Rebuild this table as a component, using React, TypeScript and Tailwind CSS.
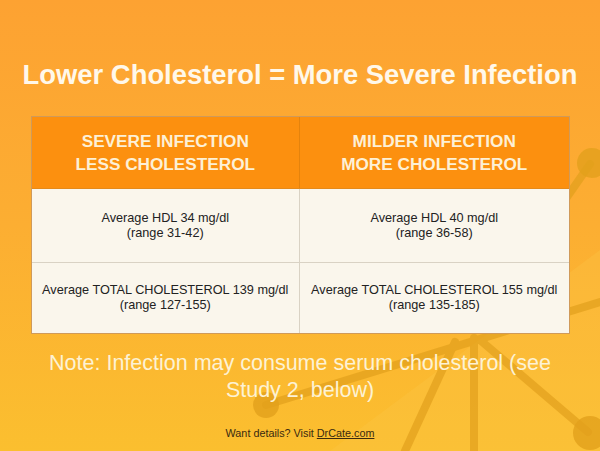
const font = { fontFamily: '"Liberation Sans", Arial, sans-serif' };

function Molecule() {
  // decorative network drawn behind the slide content
  return (
    <svg className="absolute inset-0" width="600" height="451" viewBox="0 0 600 451">
      <polygon points="330,451 600,250 600,451" fill="#fcc64a" opacity="0.3" />
      <g stroke="#e2a01c" strokeWidth="8" opacity="0.7" strokeLinecap="round">
        <line x1="266" y1="405" x2="600" y2="302" />
        <line x1="455" y1="342" x2="405" y2="451" />
        <line x1="474" y1="338" x2="474" y2="451" />
        <line x1="480" y1="340" x2="588" y2="432" />
        <line x1="590" y1="164" x2="565" y2="200" />
      </g>
      <g fill="#e2a01c" opacity="0.8">
        <circle cx="266" cy="405" r="13" />
        <circle cx="592" cy="163" r="15" />
        <circle cx="590" cy="433" r="17" />
      </g>
    </svg>
  );
}

function HeadCell({ lines, last }: { lines: string[]; last?: boolean }) {
  return (
    <div
      className={`flex flex-col items-center justify-center bg-[#fc900f] text-[17.2px] font-bold leading-[23px] text-[#fdf0d6] ${
        last ? "" : "border-r border-[#e5830c]"
      }`}
    >
      {lines.map((l) => (
        <span key={l}>{l}</span>
      ))}
    </div>
  );
}

function Cell({ lines, last }: { lines: string[]; last?: boolean }) {
  return (
    <div
      className={`flex flex-col items-center justify-center text-[12.7px] leading-[15px] text-[#222] ${
        last ? "" : "border-r border-[#d9d2c4]"
      }`}
    >
      {lines.map((l) => (
        <span key={l}>{l}</span>
      ))}
    </div>
  );
}

export default function App() {
  return (
    <div
      className="relative h-[451px] w-[600px] overflow-hidden bg-[linear-gradient(180deg,#fda232_0%,#fcae32_50%,#fbbf2f_100%)]"
      style={font}
    >
      <Molecule />
      <div className="relative flex flex-col items-center">
        <h1 className="mt-[59px] text-[27.4px] font-bold leading-[32px] text-[#fff8ea]">
          Lower Cholesterol = More Severe Infection
        </h1>

        <div className="mt-[25px] w-[539px] border border-[#cf9a5a] bg-[#faf6ec]">
          <div className="grid h-[72px] grid-cols-2 border-b border-[#e58a1a]">
            <HeadCell lines={["SEVERE INFECTION", "LESS CHOLESTEROL"]} />
            <HeadCell lines={["MILDER INFECTION", "MORE CHOLESTEROL"]} last />
          </div>
          <div className="grid h-[74px] grid-cols-2 border-b border-[#d9d2c4]">
            <Cell lines={["Average HDL 34 mg/dl", "(range 31-42)"]} />
            <Cell lines={["Average HDL 40 mg/dl", "(range 36-58)"]} last />
          </div>
          <div className="grid h-[70px] grid-cols-2">
            <Cell lines={["Average TOTAL CHOLESTEROL 139 mg/dl", "(range 127-155)"]} />
            <Cell lines={["Average TOTAL CHOLESTEROL 155 mg/dl", "(range 135-185)"]} last />
          </div>
        </div>

        <p className="mt-[16px] w-[540px] text-center text-[21.5px] leading-[27px] text-[#fdf2d4]">
          Note: Infection may consume serum cholesterol (see Study 2, below)
        </p>

        <p className="mt-[22px] text-[10.8px] leading-[14px] text-[#3a2a10]">
          Want details? Visit <span className="underline">DrCate.com</span>
        </p>
      </div>
    </div>
  );
}
